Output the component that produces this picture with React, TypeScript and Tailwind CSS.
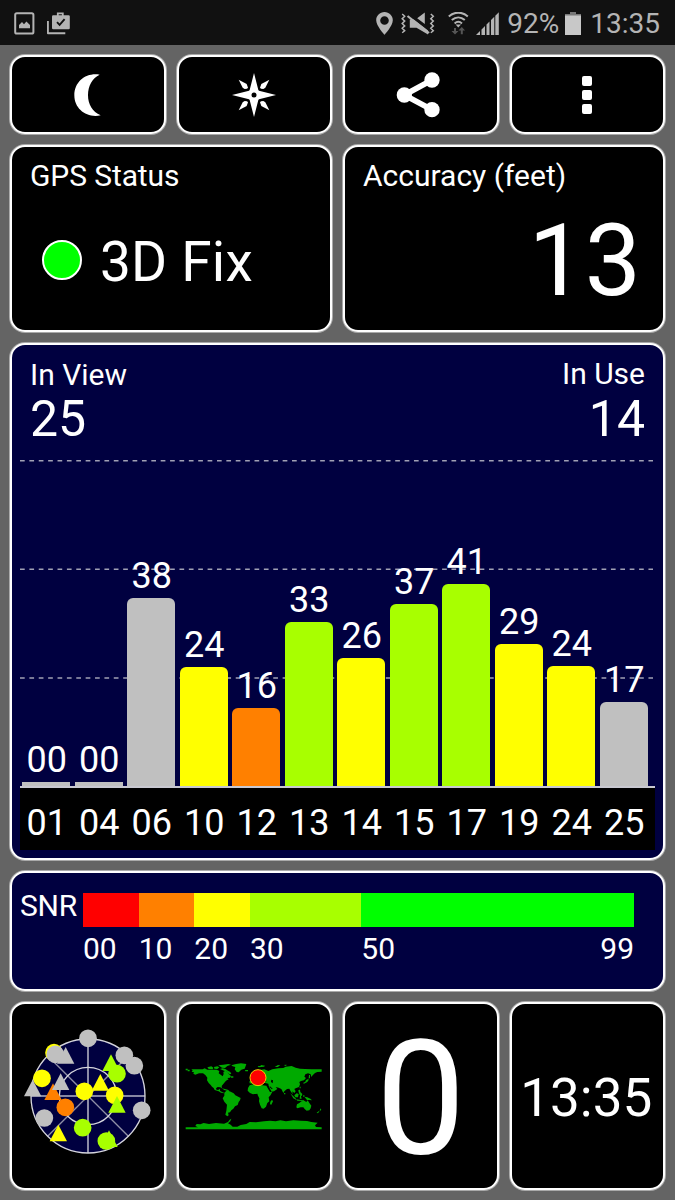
import { ReactNode } from "react";

const SNR_COLORS = {
  none: "#c0c0c0",
  red: "#ff0000",
  orange: "#ff8000",
  yellow: "#ffff00",
  lime: "#a8ff00",
  green: "#00ff00",
};

type Level = keyof typeof SNR_COLORS;

interface Satellite {
  id: string;
  snr: string;
  height: number;
  level: Level;
}

const SATELLITES: Satellite[] = [
  { id: "01", snr: "00", height: 4, level: "none" },
  { id: "04", snr: "00", height: 4, level: "none" },
  { id: "06", snr: "38", height: 188, level: "none" },
  { id: "10", snr: "24", height: 119, level: "yellow" },
  { id: "12", snr: "16", height: 78, level: "orange" },
  { id: "13", snr: "33", height: 164, level: "lime" },
  { id: "14", snr: "26", height: 128, level: "yellow" },
  { id: "15", snr: "37", height: 182, level: "lime" },
  { id: "17", snr: "41", height: 202, level: "lime" },
  { id: "19", snr: "29", height: 142, level: "yellow" },
  { id: "24", snr: "24", height: 120, level: "yellow" },
  { id: "25", snr: "17", height: 84, level: "none" },
];

const SCALE: { from: string; span: number; level: Level }[] = [
  { from: "00", span: 10, level: "red" },
  { from: "10", span: 10, level: "orange" },
  { from: "20", span: 10, level: "yellow" },
  { from: "30", span: 20, level: "lime" },
  { from: "50", span: 49, level: "green" },
];

// c = circle (centre), t = triangle (apex)
const SKY: ["c" | "t", number, number, Level][] = [
  ["c", 161, 188, "yellow"],
  ["t", 196, 171, "none"],
  ["c", 165, 193, "none"],
  ["c", 263, 145, "none"],
  ["c", 372, 196, "none"],
  ["c", 402, 227, "none"],
  ["t", 332, 193, "lime"],
  ["c", 350, 251, "lime"],
  ["c", 125, 265, "yellow"],
  ["t", 97, 269, "none"],
  ["t", 158, 280, "orange"],
  ["t", 181, 250, "none"],
  ["c", 252, 304, "yellow"],
  ["t", 300, 252, "yellow"],
  ["c", 343, 316, "yellow"],
  ["t", 350, 318, "lime"],
  ["c", 424, 361, "none"],
  ["c", 195, 352, "orange"],
  ["c", 132, 384, "none"],
  ["t", 174, 404, "yellow"],
  ["c", 247, 413, "lime"],
  ["t", 326, 421, "lime"],
  ["c", 318, 453, "lime"],
];

function Panel({
  className = "",
  children,
}: {
  className?: string;
  children: ReactNode;
}) {
  return (
    <div
      className={`rounded-[15px] border-2 border-white ring-1 ring-white/45 overflow-hidden ${className}`}
    >
      {children}
    </div>
  );
}

function StatusBar() {
  return (
    <div className="h-[45px] shrink-0 bg-[#111111] flex items-center pl-[14px] pr-[15px] pt-[2px] text-[#b4b4b4] text-[28px] leading-none">
      <svg width="21" height="23" viewBox="0 0 21 23">
        <rect x="1.2" y="1.2" width="18.2" height="20.4" rx="1.6" fill="none" stroke="currentColor" strokeWidth="2" />
        <path d="M5 16.2v-3.2l3-3 2 2.3 2.4-2.8 3.6 3.4v3.3z" fill="currentColor" />
      </svg>
      <svg className="ml-3" width="23" height="23" viewBox="0 0 23 23">
        <path d="M.9 9v12.2h17.4" fill="none" stroke="currentColor" strokeWidth="1.9" strokeLinejoin="round" />
        <path d="M10.8 4V1.3h5V4" fill="none" stroke="currentColor" strokeWidth="1.8" />
        <rect x="5" y="3.2" width="17.8" height="14" rx="1.2" fill="currentColor" />
        <path d="M10 10.2l2.6 2.6 5-5.6" fill="none" stroke="#111111" strokeWidth="1.9" />
      </svg>
      <div className="flex-1" />
      {/* Location */}
      <svg width="17" height="23" viewBox="0 0 17 23">
        <path d="M8.5 0C3.8 0 .2 3.7.2 8.2c0 5.7 8.3 14.6 8.3 14.6s8.3-8.9 8.3-14.6C16.8 3.7 13.2 0 8.5 0zm0 12.8a4.300 4.300 0 1 1 0-8.600 4.300 4.300 0 0 1 0 8.600z" fill="currentColor" />
      </svg>
      {/* Vibrate / mute */}
      <svg className="ml-[8px]" width="34" height="23" viewBox="0 0 34 23">
        <path
          d="M1.200 2l2.500 2.300-2.500 2.400 2.500 2.400-2.500 2.400 2.500 2.400-2.500 2.400 2.500 2.400L1.200 20.800M29.800 2l2.500 2.300-2.500 2.400 2.500 2.400-2.500 2.400 2.500 2.400-2.500 2.400 2.500 2.400-2.500 2.100"
          fill="none"
          stroke="currentColor"
          strokeWidth="1.500"
        />
        <path d="M8.800 7.500h4L27 18.500v4L15.500 15.800H8.800zM16.200 6.300L23.800.5v11.500z" fill="currentColor" />
        <path d="M6.500 4L28 21" stroke="currentColor" strokeWidth="2.200" />
      </svg>
      <svg className="ml-[13px]" width="21" height="23" viewBox="0 0 21 23">
        <g fill="none" stroke="currentColor" strokeWidth="2">
          <path d="M.8 4.500C6.400-.6 14.200-.6 19.800 4.500" />
          <path d="M3.800 8C7.700 4.500 12.900 4.500 16.800 8" />
          <path d="M6.600 11.400c2.300-2 5.100-2 7.400 0" />
        </g>
        <path d="M7.600 12.400h5.400l-2.700 3z" fill="currentColor" />
        <path d="M6 16v3H3.500l3.500 3.500 3.500-3.500H8v-3zM12.800 22.300v-3.800h-2.300l3.300-3.500 3.300 3.500h-2.300v3.800z" fill="#555555" />
      </svg>
      <svg className="ml-[7px]" width="23" height="23" viewBox="0 0 23 23" fill="currentColor">
        <path d="M0 23l4-4v4zM5.500 17.500l3.500-3.400V23H5.500zM10.500 12.500l3-3V23h-3zM15 8l3.300-3.200V23H15zM19.300 3.700L22.800.2V23h-3.500z" />
      </svg>
      <span className="ml-[8px]">92%</span>
      <svg className="ml-[6px]" width="16" height="23" viewBox="0 0 16 23">
        <path d="M5 0h6v2h5v21H0V2h5z" fill="#c8c8c8" />
        <path d="M5 0h6v2h5v1.500H0V2h5z" fill="#777777" />
      </svg>
      <span className="ml-[9px]">13:35</span>
    </div>
  );
}

function Toolbar() {
  const button = "flex items-center justify-center bg-black";
  return (
    <div className="grid grid-cols-4 gap-[11px] h-[79px]">
      <Panel className={button}>
        <svg width="50" height="50" viewBox="188 209 150 150">
          <path d="M298 223C258 216 222 243 222 285C222 327 260 354 301 345C276 334 263 312 263 284C263 256 276 233 298 223Z" fill="white" />
        </svg>
      </Panel>
      <Panel className={button}>
        <svg width="50" height="50" viewBox="-75 -75 150 150" fill="white">
          <path d="M0-66L13-15 15-13 66 0 15 13 13 15 0 66-13 15-15 13-66 0-15-13-13-15Z" />
          <circle r="7.500" fill="black" />
          <path d="M46-46L34-22 28-18 21-19 18-22 22-33Z" />
          <path d="M46 46L34 22 28 18 21 19 18 22 22 33Z" />
          <path d="M-46-46L-34-22-28-18-21-19-18-22-22-33Z" />
          <path d="M-46 46L-34 22-28 18-21 19-18 22-22 33Z" />
        </svg>
      </Panel>
      <Panel className={button}>
        <svg width="50" height="50" viewBox="182 209 150 150">
          <path d="M290 239L207 284L290 328" fill="none" stroke="white" strokeWidth="17" />
          <circle cx="207" cy="284" r="23" fill="white" />
          <circle cx="290" cy="239" r="23" fill="white" />
          <circle cx="290" cy="328" r="23" fill="white" />
        </svg>
      </Panel>
      <Panel className={button}>
        <div className="flex flex-col gap-1">
          <span className="size-[10px] rounded-xs bg-white" />
          <span className="size-[10px] rounded-xs bg-white" />
          <span className="size-[10px] rounded-xs bg-white" />
        </div>
      </Panel>
    </div>
  );
}

function FixPanels() {
  return (
    <div className="grid grid-cols-2 gap-[11px] h-[187px]">
      <Panel className="bg-black pt-[14px] pl-[18px]">
        <div className="text-[30px] leading-none tracking-[-0.1px]">GPS Status</div>
        <div className="flex items-center mt-[44px]">
          <span className="ml-3 mb-[5px] size-10 rounded-full border-2 border-white bg-[#00ff00]" />
          <span className="ml-[18px] text-[55px] leading-none tracking-[0.2px]">3D Fix</span>
        </div>
      </Panel>
      <Panel className="bg-black pt-[14px] pl-[18px] pr-[22px]">
        <div className="text-[30px] leading-none">Accuracy (feet)</div>
        <div className="mt-[20px] text-[100px] leading-none text-right">13</div>
      </Panel>
    </div>
  );
}

function SatelliteChart() {
  return (
    <Panel className="h-[517px] bg-[#000040] px-[8px] pt-[15px] flex flex-col">
      <div className="flex justify-between px-[10px]">
        <div>
          <div className="text-[30px] leading-none">In View</div>
          <div className="mt-1 text-[50px] leading-none">25</div>
        </div>
        <div className="text-right">
          <div className="-mt-px text-[30px] leading-none">In Use</div>
          <div className="mt-[5px] text-[50px] leading-none">14</div>
        </div>
      </div>

      <div className="relative mt-[16px] h-[328px] border-b-2 border-[#c8c8d0]">
        {/* Grid lines, drawn behind the bars */}
        <svg className="absolute inset-0" width="635" height="326" viewBox="0 0 635 326">
          <path
            d="M0 .8H633M0 109.300H633M0 218H633"
            stroke="#a0a0b4"
            strokeWidth="1.600"
            strokeDasharray="4.700 4.680"
          />
        </svg>
        <div className="relative h-full flex items-end gap-[4.5px] pl-[2.2px]">
          {SATELLITES.map((s) => (
            <div key={s.id} className="w-12 shrink-0 flex flex-col items-center">
              <span className="mb-[4px] pl-px text-[36px] leading-none">{s.snr}</span>
              <div
                className={`w-full ${s.height > 10 ? "rounded-t-md" : ""}`}
                style={{ height: s.height, background: SNR_COLORS[s.level] }}
              />
            </div>
          ))}
        </div>
      </div>
      <div className="h-[62px] bg-black flex items-start gap-[4.5px] pl-[2.2px] pt-[17px]">
        {SATELLITES.map((s) => (
          <span key={s.id} className="w-12 shrink-0 pl-px text-center text-[36px] leading-none">
            {s.id}
          </span>
        ))}
      </div>
    </Panel>
  );
}

function SnrScale() {
  return (
    <Panel className="h-[120px] bg-[#000040] flex pt-5 pl-[8px] text-[30px] leading-none">
      <span className="w-[63px] shrink-0 -mt-[2px] tracking-[-0.2px]">SNR</span>
      <div className="w-[551px]">
        <div className="flex h-[34px]">
          {SCALE.map((s) => (
            <div
              key={s.from}
              style={{ flex: `${s.span} 0 0`, background: SNR_COLORS[s.level] }}
            />
          ))}
        </div>
        <div className="flex mt-[7px]">
          {SCALE.map((s) => (
            <div key={s.from} className="flex justify-between" style={{ flex: `${s.span} 0 0` }}>
              <span>{s.from}</span>
              {s.from === "50" && <span>99</span>}
            </div>
          ))}
        </div>
      </div>
    </Panel>
  );
}

function SkyPlot() {
  return (
    <svg width="134" height="134" viewBox="62 117 402 402">
      <circle cx="263" cy="318" r="171" fill="#000040" />
      <g fill="none" stroke="#8f8fa6" strokeWidth="4">
        <path d="M142 197L384 439M142 439L384 197" />
        <path d="M92 318H434" stroke="#b4b4c4" strokeWidth="5" />
      </g>
      <g fill="none" stroke="#d4d4dc" strokeWidth="4">
        <circle cx="263" cy="318" r="171" />
        <circle cx="263" cy="318" r="86" />
        <path d="M263 147V489" />
      </g>
      {SKY.map(([kind, x, y, level]) =>
        kind === "c" ? (
          <circle key={`${x}-${y}`} cx={x} cy={y} r="26.500" fill={SNR_COLORS[level]} />
        ) : (
          <path key={`${x}-${y}`} d={`M${x} ${y}l26 50h-52z`} fill={SNR_COLORS[level]} />
        ),
      )}
    </svg>
  );
}

function WorldMap() {
  return (
    <svg className="mr-[2px]" width="137" height="67" viewBox="45 70 411 201" fill="#00aa00">
      {/* North America */}
      <path d="M47 87h6v3h6v5h-6v-3h-6zM64 89H98L104 86L112 90H140L148 94L146 101L153 106L158 110L161 103L160 97L166 93L173 97L177 104L183 109L180 114L172 115L176 119L168 123L163 129L158 135L155 139L156 146L151 143L143 142L138 146L140 151L146 150L150 147L150 153L156 157L162 159L161 161L153 159L146 155L134 151L131 145L126 141L122 136L116 130L111 122L112 114L106 106L99 101L87 101L76 105L70 102L72 98L65 96L68 92Z" />
      <path d="M112 83L124 80L130 84L128 89L116 88ZM132 82L142 80L148 83L142 88L133 87ZM145 77L160 75L175 73L183 75L172 79L165 85L156 84ZM150 88L158 86L166 88L174 93L181 97L184 103L178 104L172 97L162 93ZM182 110L190 110L190 114L183 114ZM155 146L168 149L178 152L174 154L163 151Z" />
      {/* Greenland, Iceland */}
      <path d="M184 77L198 73L213 71L229 73L227 79L224 87L214 90L206 98L200 97L194 89L196 82L188 80ZM225 91L234 91L234 95L226 95Z" />
      {/* South America */}
      <path d="M163 159L171 152L182 156L191 161L196 167L212 175L210 182L206 187L203 196L195 200L190 207L184 212L180 218L174 219L176 227L172 230L166 225L169 213L171 195L163 186L158 176L163 168Z" />
      {/* Africa */}
      <path d="M239 137L256 132L262 133L266 137L277 137L289 138L295 149L300 157L307 156L302 166L296 173L298 185L292 190L288 201L281 207L275 206L270 195L267 185L268 176L264 168L262 162L249 164L240 160L233 153L234 145ZM306 180L309 185L304 195L300 194L301 186Z" />
      {/* Eurasia */}
      <path d="M238 125L247 123L245 115L252 108L263 99L270 91L283 89L295 94L307 89L325 86L340 85L347 81L365 79L377 84L390 87L405 88L425 89L455 89L455 96L442 97L435 100L428 107L424 112L422 104L414 101L406 104L403 111L408 115L402 122L393 124L388 127L390 134L387 142L377 146L373 148L377 155L373 160L367 155L368 164L362 155L358 147L351 148L343 155L340 160L334 148L326 144L317 142L322 148L312 155L305 156L299 146L296 138L295 132L286 130L277 130L271 128L276 135L266 130L258 127L250 127L247 132L239 131Z" />
      <path d="M263 79h8l2-3 12 2-3 3-16 2zM314 82l10-6 7 1-8 5zM341 76l9-1-2 4zM240 108l6-5 4 7-4 5-5-1z" />
      {/* Asian islands */}
      <path d="M408 121L415 118L416 121L412 127L402 132L399 130L406 126ZM417 106L420 106L420 115L416 117ZM389 141h3v5h-3zM385 151l5-1 1 7 6 6-1 4-7-2-3-7zM361 161L369 168L378 177L378 180L370 176ZM373 167L380 161L386 163L384 173L376 173ZM378 179L392 181L402 182L402 184L382 183ZM390 167L397 166L393 170L395 177L389 177ZM400 166h3v6h-3zM403 171L412 173L421 177L426 182L419 181L411 181ZM342 160h4v4h-4z" />
      {/* Australia, New Zealand */}
      <path d="M381 194L388 190L394 185L403 183L409 187L413 182L418 190L424 198L422 206L418 212L410 213L404 208L400 203L392 203L382 206L379 203ZM451 206L454 211L449 214ZM447 214L448 217L442 221L440 219Z" />
      {/* Antarctica */}
      <path d="M47 263H84L76 259L80 253L91 254L101 250L117 253L138 250L162 252L174 247L179 240L184 237L181 245L174 251L182 255L188 261L202 261L212 256L229 253L239 247L258 248L282 245L300 243L317 245L331 242L348 245L370 242L392 243L411 244L424 247L443 249L435 257L438 262L455 263V269H47Z" />
      <path d="M272 120h10l8 4-4 4-12-1zM304 120l5 2-1 9-5-4zM300 140l8 7-2 2-8-7z" fill="black" />
      <circle cx="264" cy="114" r="24" fill="#ff0000" stroke="#f0d000" strokeWidth="3" />
    </svg>
  );
}

function BottomTiles() {
  const tile = "flex items-center justify-center bg-black leading-none";
  return (
    <div className="grid grid-cols-4 gap-[11px] h-[188px]">
      <Panel className={tile}>
        <SkyPlot />
      </Panel>
      <Panel className={tile}>
        <WorldMap />
      </Panel>
      <Panel className={`${tile} pt-[5px] text-[160px]`}>0</Panel>
      <Panel className={`${tile} pt-[4px] pr-[2px] text-[53px]`}>13:35</Panel>
    </div>
  );
}

export default function App() {
  return (
    <div className="w-[675px] h-[1200px] flex flex-col overflow-hidden bg-[#646464] font-[Roboto,sans-serif] text-white">
      <StatusBar />
      <div className="flex flex-col gap-[11px] px-[10px] pt-[10px]">
        <Toolbar />
        <FixPanels />
        <SatelliteChart />
        <SnrScale />
        <BottomTiles />
      </div>
    </div>
  );
}
